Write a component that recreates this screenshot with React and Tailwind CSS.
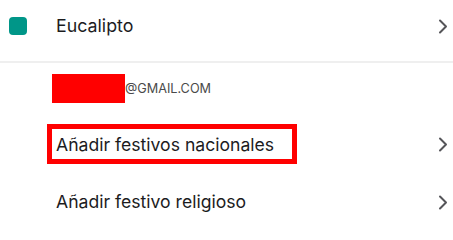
import React from "react";

function Chevron() {
  return (
    <svg width="10" height="15" viewBox="0 0 10 15" className="shrink-0">
      <path d="M2 1.5 L8 7.5 L2 13.5" fill="none" stroke="#555559" strokeWidth="2" strokeLinecap="round" strokeLinejoin="round" />
    </svg>
  );
}

function App() {
  return (
    <div className="w-[453px] h-[227px] bg-white overflow-hidden text-[#1c1c1e]" style={{ fontFamily: "Inter, sans-serif" }}>
      <div className="h-[61px] flex items-center pb-[9px] pl-[9px] pr-[5px]">
        <div className="w-[18px] h-[18px] rounded-[4px] bg-[#009688]" />
        <span className="ml-[29px] text-[17.8px] flex-1">Eucalipto</span>
        <Chevron />
      </div>
      <div className="h-[2px] bg-[#efefef]" />
      <div className="h-[50px] flex items-center pl-[52px]">
        <div className="w-[73px] h-[29px] bg-[#ff0000]" />
        <span className="text-[12.7px] text-[#4a4a4a] mt-[2px]">@GMAIL.COM</span>
      </div>
      <div className="h-[62px] flex items-center pr-[5px]">
        <div className="ml-[47px] w-[250px] h-[40px] border-[5px] border-[#ff0000] flex items-center pl-[4px] pt-[3px]">
          <span className="text-[17.6px]">Añadir festivos nacionales</span>
        </div>
        <div className="flex-1" />
        <Chevron />
      </div>
      <div className="h-[54px] flex items-center pl-[56px] pr-[5px]">
        <span className="text-[17.6px] flex-1">Añadir festivo religioso</span>
        <Chevron />
      </div>
    </div>
  );
}

export default App;
